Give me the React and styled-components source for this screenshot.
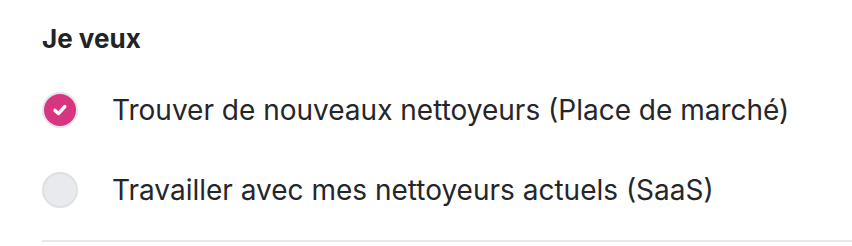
import React, { useState } from "react";
import styled, { createGlobalStyle } from "styled-components";

const Global = createGlobalStyle`
  html, body { margin: 0; padding: 0; background: #ffffff; }
  body { font-family: Inter, "Noto Sans", sans-serif; }
`;

const Section = styled.section`
  padding: 23px 0 0 42px;
  width: 810px;
`;

const Heading = styled.h3`
  margin: 0 0 16px 0;
  font-size: 26px;
  font-weight: 700;
  color: #222327;
  line-height: 1.21;
`;

const Options = styled.div`
  display: flex;
  flex-direction: column;
`;

const Row = styled.label`
  display: flex;
  align-items: center;
  gap: 34px;
  height: 80px;
  cursor: pointer;
`;

const Radio = styled.span`
  box-sizing: border-box;
  width: 36px;
  height: 36px;
  border-radius: 50%;
  border: 2px solid ${(p) => (p.$checked ? "#e4e5e9" : "#dfe0e4")};
  background: ${(p) => (p.$checked ? "#d7357f" : "#e9eaee")};
  display: flex;
  align-items: center;
  justify-content: center;
  flex-shrink: 0;
`;

const Label = styled.span`
  font-size: 28px;
  line-height: 1.21;
  color: #25262a;
  font-weight: 400;
`;

const Divider = styled.hr`
  margin: 10px 0 0 0;
  border: 0;
  height: 2px;
  background: #e4e7eb;
`;

const Check = () => (
  <svg width="18" height="18" viewBox="0 0 18 18" fill="none">
    <path d="M4 9.4 L7.5 12.5 L13.8 5.6" stroke="#fff" strokeWidth="3.4" strokeLinecap="round" strokeLinejoin="round" />
  </svg>
);

const options = [
  "Trouver de nouveaux nettoyeurs (Place de marché)",
  "Travailler avec mes nettoyeurs actuels (SaaS)",
];

export default function App() {
  const [sel, setSel] = useState(0);
  return (
    <>
      <Global />
      <Section>
        <Heading>Je veux</Heading>
        <Options>
          {options.map((o, i) => (
            <Row key={o} onClick={() => setSel(i)}>
              <Radio $checked={sel === i}>{sel === i && <Check />}</Radio>
              <Label>{o}</Label>
            </Row>
          ))}
        </Options>
        <Divider />
      </Section>
    </>
  );
}
